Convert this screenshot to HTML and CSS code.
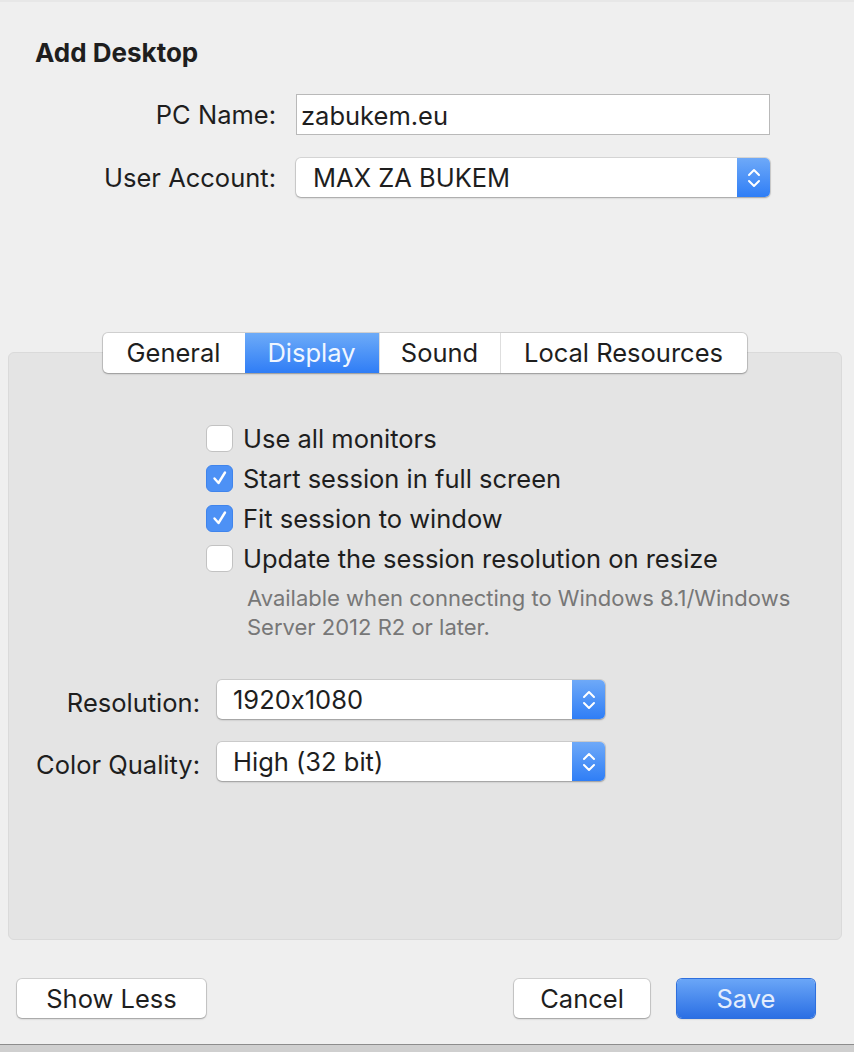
FILE: index.html
```html
<!DOCTYPE html>
<html lang="en">
<head>
  <meta charset="UTF-8">
  <title>Add Desktop</title>
  <link rel="stylesheet" href="styles.css">
</head>
<body>
  <div class="window">
    <h1 class="title">Add Desktop</h1>

    <div class="form">
      <label class="form-label" for="pcName">PC Name:</label>
      <div class="text-field" id="pcName">zabukem.eu</div>

      <label class="form-label">User Account:</label>
      <div class="popup wide">
        <span class="popup-value">MAX ZA BUKEM</span>
        <span class="stepper">
          <svg width="14" height="24" viewBox="0 0 14 24"><path d="M2 9 L7 4 L12 9 M2 15 L7 20 L12 15" fill="none" stroke="#fff" stroke-width="2" stroke-linecap="round" stroke-linejoin="round"/></svg>
        </span>
      </div>
    </div>

    <div class="tab-box">
      <div class="tabs">
        <div class="tab">General</div>
        <div class="tab selected">Display</div>
        <div class="tab">Sound</div>
        <div class="tab">Local Resources</div>
      </div>

      <div class="checks">
        <div class="check-row">
          <span class="checkbox"></span>
          <span>Use all monitors</span>
        </div>
        <div class="check-row">
          <span class="checkbox checked">
            <svg width="18" height="18" viewBox="0 0 18 18"><path d="M3.5 9.5 L7.5 14 L14 3.5" fill="none" stroke="#fff" stroke-width="2.4" stroke-linecap="round" stroke-linejoin="round"/></svg>
          </span>
          <span>Start session in full screen</span>
        </div>
        <div class="check-row">
          <span class="checkbox checked">
            <svg width="18" height="18" viewBox="0 0 18 18"><path d="M3.5 9.5 L7.5 14 L14 3.5" fill="none" stroke="#fff" stroke-width="2.4" stroke-linecap="round" stroke-linejoin="round"/></svg>
          </span>
          <span>Fit session to window</span>
        </div>
        <div class="check-row">
          <span class="checkbox"></span>
          <span>Update the session resolution on resize</span>
        </div>
        <p class="note">Available when connecting to Windows 8.1/Windows<br>Server 2012 R2 or later.</p>
      </div>

      <div class="display-form">
        <label class="form-label">Resolution:</label>
        <div class="popup">
          <span class="popup-value">1920x1080</span>
          <span class="stepper">
            <svg width="14" height="24" viewBox="0 0 14 24"><path d="M2 9 L7 4 L12 9 M2 15 L7 20 L12 15" fill="none" stroke="#fff" stroke-width="2" stroke-linecap="round" stroke-linejoin="round"/></svg>
          </span>
        </div>

        <label class="form-label">Color Quality:</label>
        <div class="popup">
          <span class="popup-value">High (32 bit)</span>
          <span class="stepper">
            <svg width="14" height="24" viewBox="0 0 14 24"><path d="M2 9 L7 4 L12 9 M2 15 L7 20 L12 15" fill="none" stroke="#fff" stroke-width="2" stroke-linecap="round" stroke-linejoin="round"/></svg>
          </span>
        </div>
      </div>
    </div>

    <div class="footer">
      <button class="button show-less">Show Less</button>
      <div class="footer-right">
        <button class="button cancel">Cancel</button>
        <button class="button primary">Save</button>
      </div>
    </div>
  </div>
</body>
</html>
```

FILE: styles.css
```css
body {
  margin: 0;
  background: #cfcfcf;
  font-family: 'Inter', 'Roboto', sans-serif;
  font-feature-settings: "calt" 0;
  color: #1e1e1e;
}

.window {
  height: 1045px;
  box-sizing: border-box;
  background: #efefef;
  border-top: 2px solid #e7e7e7;
  border-bottom: 1px solid #8c8c8c;
  box-shadow: 0 2px 4px rgba(0, 0, 0, 0.15);
  padding-top: 36px;
  display: flex;
  flex-direction: column;
}

.title {
  margin: 0 0 0 35px;
  font-size: 26px;
  font-weight: 700;
  line-height: 30px;
}

.form {
  display: grid;
  grid-template-columns: 276px 474px;
  column-gap: 20px;
  row-gap: 23px;
  align-items: center;
  margin-top: 26px;
}

.form-label {
  justify-self: end;
  font-size: 25.5px;
}

.text-field {
  height: 41px;
  box-sizing: border-box;
  border: 1px solid #b9b9b9;
  background: #fff;
  font-size: 25.5px;
  line-height: 41px;
  padding-left: 4px;
}

.popup {
  height: 39px;
  box-sizing: border-box;
  background: #fff;
  border-radius: 5px;
  box-shadow: 0 0 0 1px rgba(0, 0, 0, 0.1), 0 1px 2px rgba(0, 0, 0, 0.25);
  display: flex;
  align-items: center;
  justify-content: space-between;
  overflow: hidden;
  font-size: 25.5px;
}

.popup.wide .popup-value {
  padding-left: 17px;
}

.popup-value {
  padding-left: 16px;
}

.stepper {
  width: 33px;
  height: 100%;
  display: flex;
  align-items: center;
  justify-content: center;
  background: linear-gradient(#6ea9f8, #2f7ef6);
}

.tab-box {
  margin: 155px 12px 0 8px;
  height: 588px;
  box-sizing: border-box;
  background: #e4e4e4;
  border: 1px solid #dadada;
  border-radius: 6px;
  display: flex;
  flex-direction: column;
}

.tabs {
  align-self: center;
  margin-top: -20px;
  margin-left: -1px;
  display: flex;
  background: #fff;
  border-radius: 5px;
  box-shadow: 0 0 0 1px rgba(0, 0, 0, 0.12), 0 1px 2px rgba(0, 0, 0, 0.25);
  overflow: hidden;
}

.tab {
  height: 40px;
  line-height: 40px;
  font-size: 25.5px;
  text-align: center;
  border-left: 1px solid #dedede;
}

.tab:nth-child(1) { width: 142px; border-left: none; }
.tab:nth-child(2) { width: 134px; }
.tab:nth-child(3) { width: 120px; }
.tab:nth-child(4) { width: 246px; }

.tab.selected {
  background: linear-gradient(#6dabf8, #2f7df6);
  color: #f0f6ff;
  border-left: none;
}

.checks {
  margin: 51px 0 0 197px;
  display: flex;
  flex-direction: column;
  gap: 12px;
}

.check-row {
  display: flex;
  align-items: center;
  gap: 10px;
  height: 28px;
  font-size: 25.5px;
}

.checkbox {
  flex: none;
  width: 27px;
  height: 27px;
  box-sizing: border-box;
  background: #fff;
  border: 1px solid #c2c2c2;
  border-radius: 6px;
  display: flex;
  align-items: center;
  justify-content: center;
}

.checkbox.checked {
  background: #4d91f5;
  border-color: #3f84ec;
}

.note {
  margin: 0 0 0 41px;
  font-size: 22px;
  line-height: 29px;
  color: #777;
}

.display-form {
  display: grid;
  grid-template-columns: 191px 388px;
  column-gap: 17px;
  row-gap: 23px;
  align-items: center;
  margin-top: 38px;
}

.display-form .form-label {
  padding-top: 6px;
}

.footer {
  margin: 39px 39px 0 17px;
  display: flex;
  justify-content: space-between;
}

.footer-right {
  display: flex;
  gap: 27px;
}

.button {
  height: 39px;
  font-family: 'Inter', 'Roboto', sans-serif;
  font-size: 25.5px;
  color: #1e1e1e;
  background: #fff;
  border: none;
  border-radius: 5px;
  box-shadow: 0 0 0 1px rgba(0, 0, 0, 0.12), 0 1px 2px rgba(0, 0, 0, 0.25);
  padding: 0;
}

.show-less { width: 189px; }
.cancel { width: 136px; }

.button.primary {
  width: 138px;
  color: #e4eefd;
  background: linear-gradient(#6aa6f7, #2b6fe4);
  box-shadow: 0 0 0 1px #2e6fdd, 0 1px 2px rgba(0, 0, 0, 0.25);
}
```
